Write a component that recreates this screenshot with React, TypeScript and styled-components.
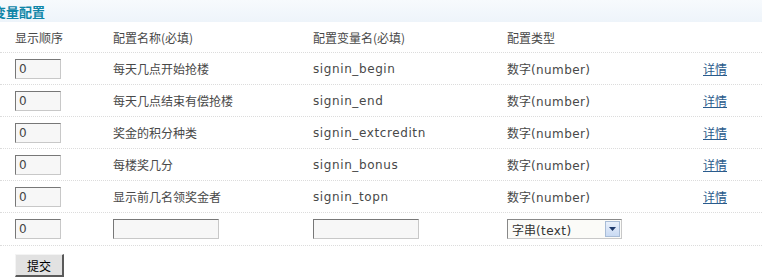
import React from "react";
import styled, { createGlobalStyle } from "styled-components";

const Global = createGlobalStyle`
  html, body { margin: 0; padding: 0; background: #fff; }
  body {
    font-family: "DejaVu Sans", "Noto Sans CJK SC", sans-serif;
    font-size: 12px;
    color: #444;
    overflow: hidden;
  }
`;

const Page = styled.div`
  width: 762px;
`;

const TitleBar = styled.div`
  height: 22px;
  display: flex;
  align-items: center;
  background: linear-gradient(#f7fafd, #eef4fa);
  overflow: hidden;
`;

const Title = styled.h2`
  margin: 0 0 0 -7px;
  font-size: 13px;
  font-weight: bold;
  color: #0f86a8;
  font-family: "Noto Sans CJK SC", sans-serif;
`;

const Row = styled.div<{ $h: number }>`
  display: grid;
  grid-template-columns: 98px 200px 194px 196px 1fr;
  align-items: center;
  height: ${(p) => p.$h}px;
  padding-left: 15px;
  border-bottom: 1px dotted #dcdcdc;
  box-sizing: border-box;
`;

const Cell = styled.div<{ $cjk?: boolean }>`
  font-family: ${(p) =>
    p.$cjk ? `"Noto Sans CJK SC", sans-serif` : `"DejaVu Sans", "Noto Sans CJK SC", sans-serif`};
  font-size: 12px;
  color: #484848;
  white-space: nowrap;
  letter-spacing: ${(p) => (p.$cjk ? "0" : "0.6px")};
`;

const Mixed = styled.span`
  font-family: "Noto Sans CJK SC", sans-serif;
  letter-spacing: 0;
`;

const Latin = styled.span`
  font-family: "DejaVu Sans", sans-serif;
  letter-spacing: 0.4px;
`;

const TextInput = styled.input<{ $w: number }>`
  box-sizing: border-box;
  width: ${(p) => p.$w}px;
  height: 20px;
  margin: 0;
  padding: 0 3px;
  border-style: solid;
  border-width: 1px;
  border-color: #777 #c8c8c8 #c8c8c8 #777;
  background: #f7f7f7;
  font-family: "DejaVu Sans", sans-serif;
  font-size: 12px;
  color: #444;
  outline: none;
`;

const Link = styled.a`
  color: #2a5b8c;
  text-decoration: underline;
  font-family: "Noto Sans CJK SC", sans-serif;
  font-size: 12px;
  letter-spacing: 0;
  cursor: pointer;
`;

const SelectBox = styled.div`
  box-sizing: border-box;
  width: 115px;
  height: 20px;
  display: flex;
  align-items: center;
  border-style: solid;
  border-width: 1px;
  border-color: #888 #c8c8c8 #c8c8c8 #888;
  background: #fbfbf8;
  padding: 0 1px 0 4px;
`;

const SelectText = styled.span`
  flex: 1;
  font-size: 12px;
  color: #333;
`;

const ArrowBox = styled.span`
  box-sizing: border-box;
  width: 15px;
  height: 16px;
  display: flex;
  align-items: center;
  justify-content: center;
  border: 1px solid #a8bcd6;
  background: linear-gradient(#e8f0fb, #c9daf3);
`;

const Footer = styled.div`
  padding: 8px 0 0 15px;
`;

const Button = styled.button`
  box-sizing: border-box;
  width: 49px;
  height: 23px;
  margin: 0;
  padding: 0;
  background: #e2e2e2;
  border-style: solid;
  border-width: 1px 2px 2px 1px;
  border-color: #f4f4f4 #5a5a5a #5a5a5a #f4f4f4;
  font-family: "Noto Sans CJK SC", sans-serif;
  font-size: 12px;
  color: #000;
`;

const rows = [
  { name: "每天几点开始抢楼", key: "signin_begin" },
  { name: "每天几点结束有偿抢楼", key: "signin_end" },
  { name: "奖金的积分种类", key: "signin_extcreditn" },
  { name: "每楼奖几分", key: "signin_bonus" },
  { name: "显示前几名领奖金者", key: "signin_topn" },
];

export default function App() {
  return (
    <Page>
      <Global />
      <TitleBar>
        <Title>变量配置</Title>
      </TitleBar>
      <Row $h={31}>
        <Cell $cjk>显示顺序</Cell>
        <Cell $cjk>配置名称(必填)</Cell>
        <Cell $cjk>配置变量名(必填)</Cell>
        <Cell $cjk>配置类型</Cell>
        <Cell />
      </Row>
      {rows.map((r) => (
        <Row $h={32} key={r.key}>
          <Cell>
            <TextInput $w={46} defaultValue="0" />
          </Cell>
          <Cell $cjk>{r.name}</Cell>
          <Cell>{r.key}</Cell>
          <Cell>
            <Mixed>数字</Mixed>
            <Latin>(number)</Latin>
          </Cell>
          <Cell>
            <Link>详情</Link>
          </Cell>
        </Row>
      ))}
      <Row $h={33}>
        <Cell>
          <TextInput $w={46} defaultValue="0" />
        </Cell>
        <Cell>
          <TextInput $w={106} />
        </Cell>
        <Cell>
          <TextInput $w={106} />
        </Cell>
        <Cell>
          <SelectBox>
            <SelectText>
              <Mixed>字串</Mixed>
              <Latin>(text)</Latin>
            </SelectText>
            <ArrowBox>
              <svg width="7" height="4" viewBox="0 0 7 4">
                <path d="M0 0 H7 L3.5 4 Z" fill="#1d3a6b" />
              </svg>
            </ArrowBox>
          </SelectBox>
        </Cell>
        <Cell />
      </Row>
      <Footer>
        <Button>提交</Button>
      </Footer>
    </Page>
  );
}
